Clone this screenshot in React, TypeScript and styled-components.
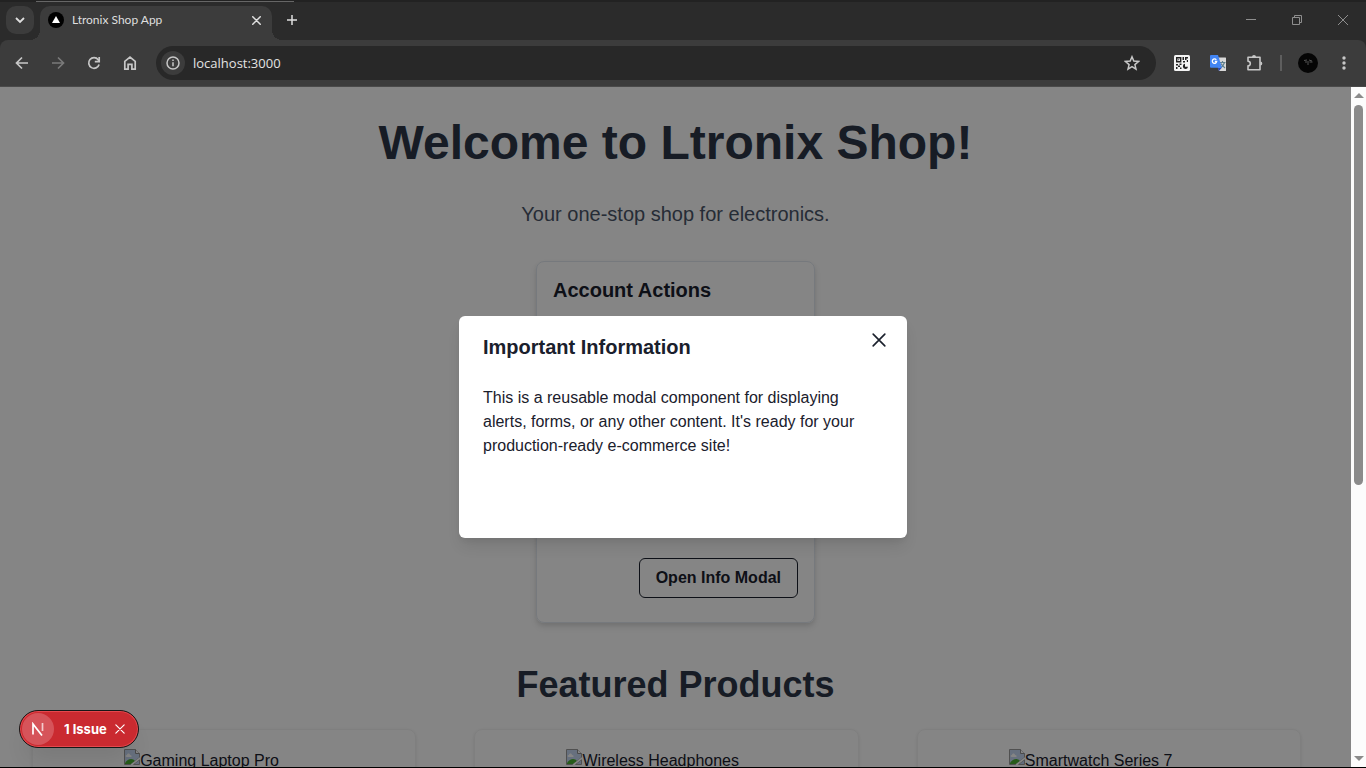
import React from "react";
import styled, { createGlobalStyle, css } from "styled-components";

const GlobalStyle = createGlobalStyle`
  *, *::before, *::after { box-sizing: border-box; }
  body { margin: 0; background: #000; font-family: "Liberation Sans", Arial, sans-serif; }
  h1, h2, p { margin: 0; }
  button, input { font: inherit; color: inherit; border: 0; padding: 0; margin: 0; background: none; }
  svg { display: block; flex: none; }
`;

const BrowserWindow = styled.div`
  display: flex;
  flex-direction: column;
  height: 100vh;
  overflow: hidden;
  background: #2b2b2b;
  border-bottom: 1px solid #000;
`;

/* Title bar with the tab strip */

const TabStrip = styled.header`
  position: relative;
  display: flex;
  flex: none;
  height: 40px;
  padding-left: 6px;
  border-top: 2px solid #222;
  color: #dfdfdf;

  /* edge of the window behind this one */
  &::before {
    content: "";
    position: absolute;
    top: -1px;
    left: 36px;
    width: 258px;
    height: 1px;
    background: #666;
  }
`;

const TabSearch = styled.button`
  display: grid;
  place-items: center;
  width: 28px;
  height: 28px;
  margin-top: 4px;
  border-radius: 10px;
  background: #3c3c3c;
`;

const Tab = styled.div`
  position: relative;
  display: flex;
  align-items: center;
  gap: 8px;
  width: 232px;
  height: 34px;
  margin: 4px 0 0 6px;
  padding: 0 8px 6px;
  border-radius: 10px 10px 0 0;
  background: #3c3c3c;
  font: 12px/16px Lato, "Open Sans", sans-serif;

  &::before,
  &::after {
    content: "";
    position: absolute;
    bottom: 0;
    width: 10px;
    height: 10px;
  }
  &::before {
    right: 100%;
    background: radial-gradient(circle at 0 0, transparent 10px, #3c3c3c 10px);
  }
  &::after {
    left: 100%;
    background: radial-gradient(circle at 100% 0, transparent 10px, #3c3c3c 10px);
  }
`;

const TabTitle = styled.span`
  flex: 1;
`;

const StripButton = styled.button`
  display: grid;
  place-items: center;
  width: 16px;
  height: 16px;
`;

const NewTab = styled(StripButton)`
  width: 28px;
  height: 28px;
  margin: 4px 0 0 6px;
`;

const WindowControls = styled.div`
  display: flex;
  margin-left: auto;
  height: 36px;
  color: #8e8e8e;
`;

const WindowButton = styled.button`
  display: grid;
  place-items: center;
  width: 46px;
`;

/* Navigation toolbar */

const Toolbar = styled.nav`
  display: flex;
  flex: none;
  align-items: center;
  height: 47px;
  padding: 0 4px;
  border-bottom: 1px solid #4a4a4a;
  border-radius: 8px 8px 0 0;
  background: #3c3c3c;
  color: #c7c7c7;
`;

const ToolButton = styled.button<{ $dim?: boolean }>`
  display: grid;
  place-items: center;
  width: 36px;
  height: 34px;
  color: ${(p) => (p.$dim ? "#7a7a7a" : "inherit")};
`;

const AddressBar = styled.div`
  display: flex;
  flex: 1;
  align-items: center;
  gap: 8px;
  height: 34px;
  margin: 0 8px;
  padding: 0 6px 0 5px;
  border-radius: 17px;
  background: #282828;
`;

const SiteInfo = styled.button`
  display: grid;
  place-items: center;
  width: 24px;
  height: 24px;
  border-radius: 50%;
  background: #3c3c3c;
`;

const AddressInput = styled.input`
  flex: 1;
  min-width: 0;
  color: #e3e3e3;
  font: 13px/20px "Open Sans", "Noto Sans", sans-serif;
  outline: none;
`;

const Divider = styled.span`
  width: 2px;
  height: 16px;
  margin: 0 8px;
  background: #5e5e5e;
`;

/* Page area and its scrollbar */

const Viewport = styled.div`
  position: relative;
  display: flex;
  flex: 1;
  min-height: 0;
`;

const Page = styled.main`
  flex: 1;
  min-width: 0;
  overflow: hidden;
  background: #fff;
  color: #1a202c;
  padding: 26px 32px 0;
  text-align: center;
`;

const PageTitle = styled.h1`
  color: #2d3748;
  font-size: 48px;
  line-height: 60px;
`;

const Tagline = styled.p`
  margin-top: 26px;
  color: #4a5568;
  font-size: 20px;
  line-height: 30px;
`;

const AccountCard = styled.section`
  display: flex;
  flex-direction: column;
  justify-content: space-between;
  width: 279px;
  height: 362px;
  margin: 32px auto 0;
  padding: 16px 16px 24px;
  border: 1px solid #e2e8f0;
  border-radius: 8px;
  box-shadow: 0 4px 6px rgba(0, 0, 0, 0.1), 0 2px 4px rgba(0, 0, 0, 0.06);
  text-align: left;
`;

const CardTitle = styled.h2`
  font-size: 20px;
  line-height: 24px;
`;

const OutlineButton = styled.button`
  align-self: flex-end;
  height: 40px;
  padding: 0 16px;
  border: 1px solid #1a202c;
  border-radius: 6px;
  font-weight: 700;
  font-size: 16px;
`;

const SectionTitle = styled.h2`
  margin-top: 40px;
  color: #2d3748;
  font-size: 36px;
  line-height: 44px;
`;

const ProductGrid = styled.div`
  display: grid;
  grid-template-columns: repeat(3, 1fr);
  gap: 58px;
  margin-top: 22px;
  padding-right: 18px;
`;

const ProductCard = styled.article`
  height: 320px;
  padding: 19px 16px;
  border: 1px solid #f4f4f4;
  border-radius: 8px;
  box-shadow: 0 1px 3px rgba(0, 0, 0, 0.1);
`;

const MissingImage = styled.div`
  display: flex;
  width: 200px;
  height: 200px;
  margin: 0 auto;
  font-size: 16px;
  line-height: 24px;
`;

const Scrollbar = styled.div`
  display: flex;
  flex-direction: column;
  align-items: center;
  width: 15px;
  padding: 6px 0;
  background: #fcfcfc;
`;

const ScrollTrack = styled.div`
  flex: 1;
  width: 9px;
  margin: 7px 0;
`;

const ScrollThumb = styled.div`
  height: 59%;
  border-radius: 5px;
  background: #8b8b8b;
`;

/* Dialog */

const Overlay = styled.div`
  position: absolute;
  inset: 0 15px 0 0;
  background: rgba(0, 0, 0, 0.48);
`;

const DialogLayer = styled.div`
  position: absolute;
  inset: 0;
  display: grid;
  place-items: center;
  pointer-events: none;
`;

const Dialog = styled.section`
  width: 448px;
  min-height: 222px;
  border-radius: 6px;
  background: #fff;
  color: #1a202c;
  box-shadow: 0 10px 15px -3px rgba(0, 0, 0, 0.1), 0 4px 6px -2px rgba(0, 0, 0, 0.05);
  pointer-events: auto;
`;

const DialogHeader = styled.div`
  display: flex;
  justify-content: space-between;
  padding: 8px 12px 16px 24px;
`;

const DialogTitle = styled.h2`
  padding-top: 8px;
  font-size: 20px;
  line-height: 30px;
`;

const DialogClose = styled.button`
  display: grid;
  place-items: center;
  width: 32px;
  height: 32px;
`;

const DialogBody = styled.p`
  padding: 8px 24px;
  font-size: 16px;
  line-height: 24px;
`;

/* Development issue badge */

const IssueBadge = styled.div`
  position: absolute;
  left: 19px;
  bottom: 19px;
  display: flex;
  align-items: center;
  height: 38px;
  width: 120px;
  padding: 0 1px;
  border: 1px solid #171717;
  border-radius: 19px;
  background: #ca2a30;
  box-shadow: inset 0 0 0 1px #e5484d, 0 16px 24px -8px rgba(0, 0, 0, 0.12);
  color: #fff;
`;

const badgeReset = css`
  display: grid;
  place-items: center;
`;

const BadgeLogo = styled.button`
  ${badgeReset}
  width: 32px;
  height: 32px;
  margin-left: 1px;
  border-radius: 50%;
  background: #d6545a;
`;

const BadgeText = styled.button`
  margin-left: 10px;
  font: 700 13px/16px Inter, sans-serif;
`;

const BadgeClose = styled.button`
  ${badgeReset}
  margin-left: 8px;
`;

const Cross = ({ size, width }: { size: number; width: number }) => (
  <svg width={size} height={size} viewBox="0 0 12 12" stroke="currentColor" strokeWidth={width} fill="none">
    <path d="M1 1l10 10M11 1L1 11" strokeLinecap="round" />
  </svg>
);

const BrokenImage = () => (
  <svg width="16" height="16" viewBox="0 0 16 16">
    <path d="M.5.5h11l4 4v4L7 15.500H.5z" fill="#c5d6f2" stroke="#9a9a9a" />
    <path d="M11.500.5v4h4" fill="#fff" stroke="#8e8e8e" />
    <path d="M3 6c0-2 3-2 3 0 2 0 2 2 1 2H3C1 8 1 6 3 6z" fill="#fff" />
    <path d="M1 15v-1c3-5 8-5 10-2l-4 3z" fill="#4caf32" />
    <path d="M9.500 15.500l6-5v5z" fill="#bed0ee" stroke="#9a9a9a" />
    <path d="M7 16L16 9" stroke="#fff" strokeWidth="1.500" />
  </svg>
);

const products = ["Gaming Laptop Pro", "Wireless Headphones", "Smartwatch Series 7"];

export default function App() {
  return (
    <BrowserWindow>
      <GlobalStyle />
      <TabStrip>
        <TabSearch aria-label="Search tabs">
          <svg width="10" height="10" viewBox="0 0 10 10" fill="none" stroke="currentColor" strokeWidth="1.800">
            <path d="M1 3l4 4 4-4" />
          </svg>
        </TabSearch>
        <Tab>
          <svg width="16" height="16" viewBox="0 0 16 16">
            <circle cx="8" cy="8" r="8" fill="#000" />
            <path d="M8 4l4 7H4z" fill="#fff" />
          </svg>
          <TabTitle>Ltronix Shop App</TabTitle>
          <StripButton aria-label="Close tab"><Cross size={9} width={2} /></StripButton>
        </Tab>
        <NewTab aria-label="New tab">
          <svg width="12" height="12" viewBox="0 0 12 12" stroke="currentColor" strokeWidth="1.500">
            <path d="M6 1v10M1 6h10" />
          </svg>
        </NewTab>
        <WindowControls>
          <WindowButton aria-label="Minimize">
            <svg width="10" height="10" viewBox="0 0 10 10" stroke="currentColor"><path d="M0 4.500h10" /></svg>
          </WindowButton>
          <WindowButton aria-label="Restore">
            <svg width="10" height="10" viewBox="0 0 10 10" stroke="currentColor" fill="none">
              <path d="M.5 2.500h7v7h-7zM2.500 2.500v-2h7v7h-2" />
            </svg>
          </WindowButton>
          <WindowButton aria-label="Close">
            <svg width="10" height="10" viewBox="0 0 10 10" stroke="currentColor"><path d="M0 0l10 10M10 0L0 10" /></svg>
          </WindowButton>
        </WindowControls>
      </TabStrip>

      <Toolbar aria-label="Browser">
        <ToolButton aria-label="Back">
          <svg width="16" height="16" viewBox="0 0 16 16" fill="none" stroke="currentColor" strokeWidth="1.700">
            <path d="M14 8H3M8 2.500L2.500 8 8 13.500" />
          </svg>
        </ToolButton>
        <ToolButton aria-label="Forward" $dim>
          <svg width="16" height="16" viewBox="0 0 16 16" fill="none" stroke="currentColor" strokeWidth="1.700">
            <path d="M2 8h11M8 2.500L13.500 8 8 13.500" />
          </svg>
        </ToolButton>
        <ToolButton aria-label="Reload">
          <svg width="16" height="16" viewBox="0 0 16 16" fill="none" stroke="currentColor" strokeWidth="1.700">
            <path d="M13.100 9.500A5.300 5.300 0 1 1 12.200 4.700L13 6" />
            <path d="M13.200 2v4.600H8.800" />
          </svg>
        </ToolButton>
        <ToolButton aria-label="Home">
          <svg width="16" height="16" viewBox="0 0 16 16" fill="none" stroke="currentColor" strokeWidth="1.700">
            <path d="M2.800 6.300L8 2.200l5.200 4.100v7.900H9.900V9.300H6.100v4.900H2.800z" />
          </svg>
        </ToolButton>
        <AddressBar>
          <SiteInfo aria-label="Site information">
            <svg width="14" height="14" viewBox="0 0 14 14" fill="none" stroke="currentColor" strokeWidth="1.500">
              <circle cx="7" cy="7" r="6" />
              <path d="M7 6.200v4M7 3.500V5" />
            </svg>
          </SiteInfo>
          <AddressInput aria-label="Address" defaultValue="localhost:3000" />
          <ToolButton aria-label="Bookmark">
            <svg width="16" height="16" viewBox="0 0 16 16" fill="none" stroke="currentColor" strokeWidth="1.500">
              <path d="M8 1.800l1.800 4.300 4.700.4-3.600 3.100 1.100 4.600L8 11.700l-4 2.500 1.100-4.600-3.600-3.100 4.700-.4z" />
            </svg>
          </ToolButton>
        </AddressBar>
        <ToolButton aria-label="QR code extension">
          <svg width="16" height="16" viewBox="0 0 16 16">
            <rect width="16" height="16" rx="1.500" fill="#f4f4f4" />
            <path d="M2.700 2.700h4v4h-4z" fill="none" stroke="#222" strokeWidth="1.400" />
            <path d="M4.200 4.200h1v1h-1zM8.500 2H10v3H8.500zM9 6h2v1.500H9zM11 2h3v1.500h-1.500V5H11zM12.800 5H14v2h-1.200zM2 9h2v1.500H2zM5.500 8.500h2V10h-2zM4 10.500h2V12H4zM2 12h1.500v2H2zM6 12.500h1.500V14H6z" fill="#222" />
            <path d="M11 8.800a2.600 2.600 0 1 0 3 3h-3z" fill="#222" />
          </svg>
        </ToolButton>
        <ToolButton aria-label="Translate">
          <svg width="16" height="16" viewBox="0 0 16 16">
            <path d="M6 2.500h9.500a.5.5 0 0 1 .5.5v12.500a.5.500 0 0 1-.5.5H9z" fill="#d8d8d8" />
            <path d="M9 7.500h6.500M12.500 6v1.500M14.500 7.500c-.7 2.500-2 4-4 5.500M11 8.500c1 2 2 3 4 4.500" stroke="#5f7f8c" strokeWidth="1.200" fill="none" />
            <path d="M7.500 12.500H12L9 16z" fill="#2a48b8" />
            <path d="M1 0h7L12 12.700H1a1 1 0 0 1-1-1V1a1 1 0 0 1 1-1z" fill="#4285f4" />
            <path d="M6.300 4.800A2.200 2.200 0 1 0 6.700 6.500H4.800" stroke="#fff" strokeWidth="1.300" fill="none" />
          </svg>
        </ToolButton>
        <ToolButton aria-label="Extensions">
          <svg width="18" height="18" viewBox="0 0 18 18" fill="none" stroke="currentColor" strokeWidth="1.600">
            <path d="M3 3.300h12v12.400H3v-3.900a2.300 2.300 0 0 0 0-4.600z" strokeLinejoin="round" />
            <path d="M7 3a2 2 0 0 1 4 0zM15.300 7.500a2 2 0 0 1 0 4z" fill="currentColor" stroke="none" />
          </svg>
        </ToolButton>
        <Divider />
        <ToolButton aria-label="Profile">
          <svg width="20" height="20" viewBox="0 0 20 20">
            <circle cx="10" cy="10" r="10" fill="#050505" />
            <path d="M6 7.500l3-.5M11 7l3 1M7 9h2M11.500 9h3M10 8v4" stroke="#555" fill="none" />
          </svg>
        </ToolButton>
        <ToolButton aria-label="Menu">
          <svg width="4" height="14" viewBox="0 0 4 14" fill="currentColor">
            <circle cx="2" cy="2" r="1.700" /><circle cx="2" cy="7" r="1.700" /><circle cx="2" cy="12" r="1.700" />
          </svg>
        </ToolButton>
      </Toolbar>

      <Viewport>
        <Page>
          <PageTitle>Welcome to Ltronix Shop!</PageTitle>
          <Tagline>Your one-stop shop for electronics.</Tagline>
          <AccountCard>
            <CardTitle>Account Actions</CardTitle>
            <OutlineButton>Open Info Modal</OutlineButton>
          </AccountCard>
          <SectionTitle>Featured Products</SectionTitle>
          <ProductGrid>
            {products.map((name) => (
              <ProductCard key={name}>
                <MissingImage><BrokenImage />{name}</MissingImage>
              </ProductCard>
            ))}
          </ProductGrid>
        </Page>
        <Scrollbar aria-hidden="true">
          <svg width="10" height="5" viewBox="0 0 10 5" fill="#8b8b8b"><path d="M5 0l5 5H0z" /></svg>
          <ScrollTrack><ScrollThumb /></ScrollTrack>
          <svg width="10" height="5" viewBox="0 0 10 5" fill="#8b8b8b"><path d="M0 0h10L5 5z" /></svg>
        </Scrollbar>
        <Overlay />
        <DialogLayer>
          <Dialog role="dialog" aria-modal="true" aria-labelledby="dialog-title">
            <DialogHeader>
              <DialogTitle id="dialog-title">Important Information</DialogTitle>
              <DialogClose aria-label="Close"><Cross size={14} width={1.4} /></DialogClose>
            </DialogHeader>
            <DialogBody>
              This is a reusable modal component for displaying alerts, forms, or any other content. It's ready for your
              production-ready e-commerce site!
            </DialogBody>
          </Dialog>
        </DialogLayer>
        <IssueBadge>
          <BadgeLogo aria-label="Open dev tools">
            <svg width="14" height="14" viewBox="0 0 14 14" fill="none" stroke="#fff" strokeWidth="1.700">
              <path d="M2 12.500V2l9 11.500" />
              <path d="M11.500 1v8" opacity="0.700" />
            </svg>
          </BadgeLogo>
          <BadgeText>1 Issue</BadgeText>
          <BadgeClose aria-label="Dismiss"><Cross size={10} width={1.4} /></BadgeClose>
        </IssueBadge>
      </Viewport>
    </BrowserWindow>
  );
}
